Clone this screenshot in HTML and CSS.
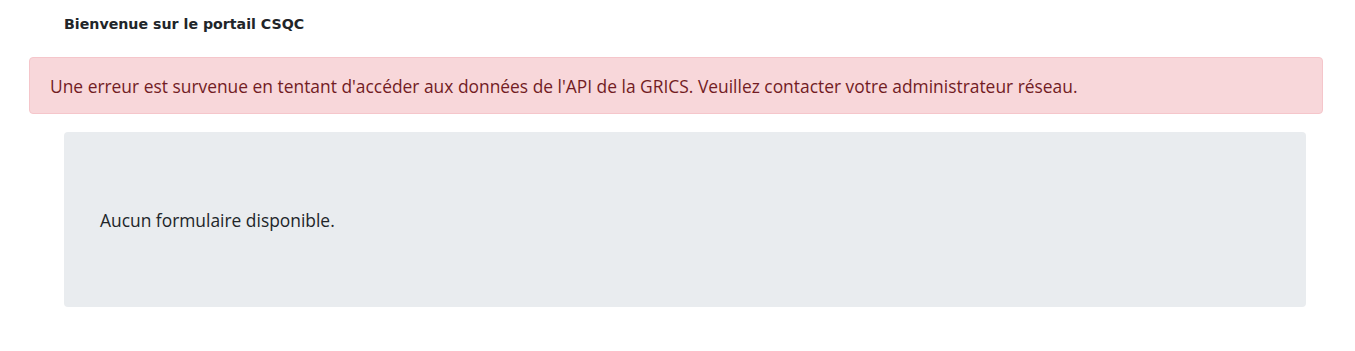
FILE: index.html
```html
<!DOCTYPE html>
<html lang="fr">
<head>
<meta charset="utf-8">
<title>Portail CSQC</title>
<link rel="stylesheet" href="styles.css">
</head>
<body>
<div class="page">
  <h1 class="welcome">Bienvenue sur le portail CSQC</h1>
  <div class="alert">Une erreur est survenue en tentant d'accéder aux données de l'API de la GRICS. Veuillez contacter votre administrateur réseau.</div>
  <div class="content">
    <div class="jumbotron">
      <p class="empty">Aucun formulaire disponible.</p>
    </div>
  </div>
</div>
</body>
</html>
```
FILE: styles.css
```css
html, body {
  margin: 0;
  padding: 0;
  background: #ffffff;
}
.page {
  padding: 13px 32px 0 29px;
  font-family: "Open Sans", "Noto Sans", sans-serif;
}
.welcome {
  margin: 0 0 22px 35px;
  font-family: "DejaVu Sans", Verdana, sans-serif;
  font-size: 14.2px;
  font-weight: bold;
  line-height: 22px;
  color: #212529;
}
.alert {
  box-sizing: border-box;
  height: 57px;
  padding: 0 20px;
  display: flex;
  align-items: center;
  background: #f8d7da;
  border: 1px solid #f5c6cb;
  border-radius: 4px;
  color: #721c24;
  font-size: 17.4px;
}
.content {
  padding: 18px 17px 0 35px;
}
.jumbotron {
  box-sizing: border-box;
  height: 175px;
  padding: 0 36px;
  display: flex;
  align-items: center;
  background: #e9ecef;
  border-radius: 4px;
}
.empty {
  margin: 0;
  font-size: 17.4px;
  color: #212529;
}
```
